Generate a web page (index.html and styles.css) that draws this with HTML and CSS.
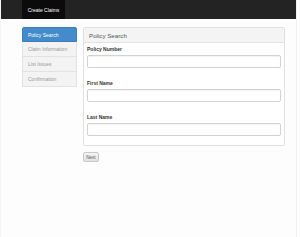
FILE: index.html
```html
<!DOCTYPE html>
<html>
<head>
<meta charset="utf-8">
<link rel="stylesheet" href="styles.css">
</head>
<body>
<div class="page">
  <nav class="navbar">
    <div class="brand">Create Claims</div>
  </nav>
  <div class="main">
    <ul class="steps">
      <li class="step active">Policy Search</li>
      <li class="step">Claim Information</li>
      <li class="step">List Issues</li>
      <li class="step">Confirmation</li>
    </ul>
    <div class="content">
      <div class="panel">
        <div class="panel-heading">Policy Search</div>
        <div class="panel-body">
          <div class="group">
            <label class="label">Policy Number</label>
            <input class="input" type="text">
          </div>
          <div class="group">
            <label class="label">First Name</label>
            <input class="input" type="text">
          </div>
          <div class="group">
            <label class="label">Last Name</label>
            <input class="input" type="text">
          </div>
        </div>
      </div>
      <button class="btn">Next</button>
    </div>
  </div>
</div>
</body>
</html>
```
FILE: styles.css
```css
* { box-sizing: border-box; }
html, body { margin: 0; padding: 0; }
body {
  font-family: "Liberation Sans", Arial, sans-serif;
  background: #fff;
  color: #333;
}
.page {
  height: 237px;
  width: 297px;
  background: #fdfdfd;
  border-right: 1px solid #f0f0f0;
  border-left: 1px solid #f4f4f4;
}
.navbar {
  height: 19px;
  background: #232323;
  display: flex;
  padding-left: 21px;
}
.brand {
  background: #0b0b0b;
  color: #fff;
  font-size: 5px;
  width: 43px;
  display: flex;
  align-items: center;
  justify-content: center;
}
.main {
  display: flex;
  padding: 8px 12px 0 21px;
  gap: 6px;
  align-items: flex-start;
}
.steps {
  list-style: none;
  margin: 0;
  padding: 0;
  width: 55px;
  flex: none;
}
.step {
  height: 15px;
  display: flex;
  align-items: center;
  padding-left: 5px;
  font-size: 5px;
  color: #999;
  background: #f3f3f3;
  border: 1px solid #e2e2e2;
  border-top: none;
}
.step.active {
  background: #438bca;
  color: #fff;
  border-color: #3b7fbb;
  border-top: 1px solid #3b7fbb;
  border-radius: 2px 2px 0 0;
}
.content {
  width: 202px;
  flex: none;
}
.panel {
  border: 1px solid #e0e0e0;
  border-radius: 2px;
  background: #fff;
}
.panel-heading {
  height: 15px;
  background: #f4f4f4;
  border-bottom: 1px solid #e2e2e2;
  font-size: 6.2px;
  color: #555;
  display: flex;
  align-items: center;
  padding-left: 5px;
}
.panel-body {
  padding: 3px 3px 9px 3px;
  display: flex;
  flex-direction: column;
  gap: 12px;
}
.group {
  display: flex;
  flex-direction: column;
  gap: 2px;
}
.label {
  font-size: 5px;
  font-weight: bold;
  color: #333;
  height: 7px;
  line-height: 7px;
}
.input {
  height: 13px;
  width: 194px;
  border: 1px solid #d2d2d2;
  border-radius: 2px;
  background: #fff;
  padding: 0;
  margin: 0;
  box-shadow: inset 0 1px 1px rgba(0,0,0,0.05);
}
.btn {
  margin-top: 6px;
  height: 10px;
  width: 16px;
  padding: 0;
  font-family: "Liberation Sans", Arial, sans-serif;
  font-size: 4.5px;
  color: #555;
  background: linear-gradient(#f4f4f4, #e2e2e2);
  border: 1px solid #c8c8c8;
  border-radius: 2px;
  display: flex;
  align-items: center;
  justify-content: center;
}
```
